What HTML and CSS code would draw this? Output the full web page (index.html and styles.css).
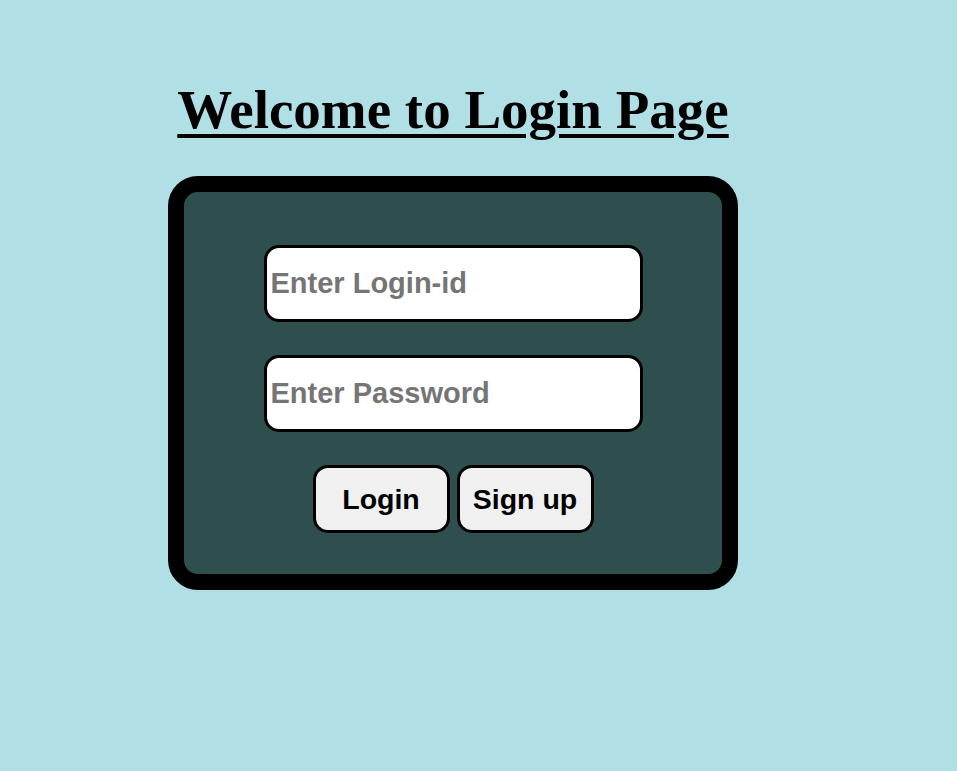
FILE: index.html
```html
<!DOCTYPE html>
<html>
<head>
<meta charset="utf-8">
<link rel="stylesheet" href="styles.css">
</head>
<body>
<div class="wrap">
  <h1 class="title">Welcome to Login Page</h1>
  <form class="card">
    <input class="field" type="text" placeholder="Enter Login-id">
    <input class="field" type="password" placeholder="Enter Password">
    <div class="actions">
      <button type="button" class="btn">Login</button>
      <button type="button" class="btn">Sign up</button>
    </div>
  </form>
</div>
</body>
</html>
```
FILE: styles.css
```css
html, body {
  margin: 0;
  padding: 0;
  background: #b0e0e6;
}
body {
  font-family: "Liberation Sans", Arial, sans-serif;
}
.wrap {
  width: 570px;
  margin-left: 168px;
  padding-top: 78px;
}
.title {
  margin: 0;
  font-family: "Liberation Serif", "Times New Roman", serif;
  font-weight: bold;
  font-size: 55px;
  line-height: 64px;
  text-align: center;
  text-decoration: underline;
  text-decoration-thickness: 4px;
  text-underline-offset: 6px;
  color: #000;
  white-space: nowrap;
}
.card {
  box-sizing: border-box;
  margin-top: 34px;
  width: 570px;
  height: 414px;
  border: 16px solid #000;
  border-radius: 30px;
  background: #2f4f4f;
  display: flex;
  flex-direction: column;
  align-items: center;
  padding-top: 53px;
}
.field {
  box-sizing: border-box;
  width: 379px;
  height: 77px;
  border: 3px solid #000;
  border-radius: 15px;
  background: #fff;
  padding: 0 5px 0 4px;
  font-family: "Liberation Sans", Arial, sans-serif;
  font-weight: bold;
  font-size: 29px;
  color: #000;
  margin: 0 0 33px 0;
  outline: none;
}
.field::placeholder {
  color: #757575;
  opacity: 1;
}
.actions {
  display: flex;
  gap: 7px;
}
.btn {
  box-sizing: border-box;
  width: 137px;
  height: 68px;
  border: 3px solid #000;
  border-radius: 15px;
  background: #f0f0f0;
  font-family: "Liberation Sans", Arial, sans-serif;
  font-weight: bold;
  font-size: 28.5px;
  color: #000;
  padding: 0;
}
```
